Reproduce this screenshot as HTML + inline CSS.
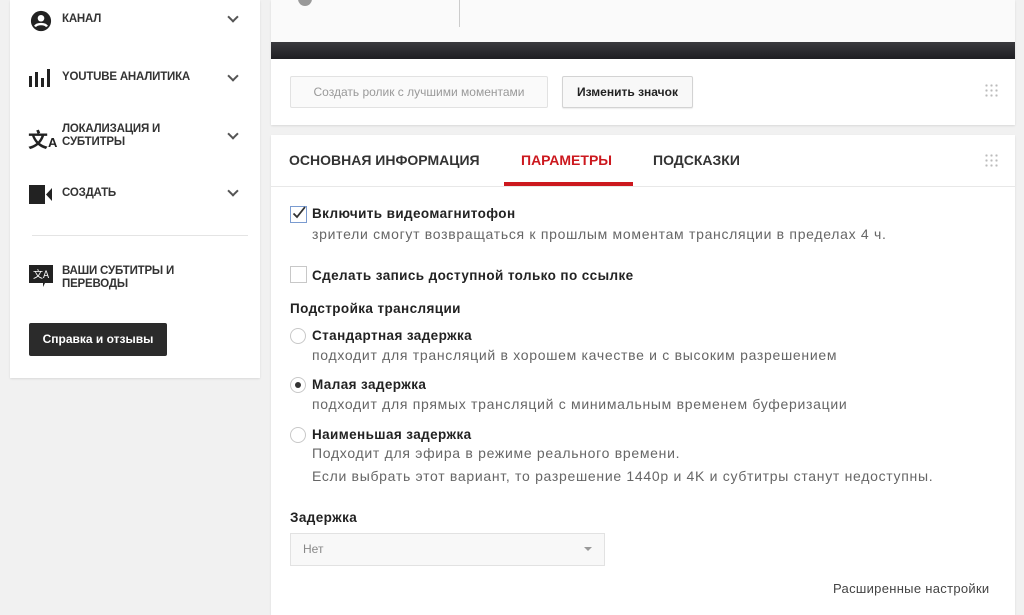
<!DOCTYPE html>
<html><head><meta charset="utf-8"><style>
*{box-sizing:border-box;margin:0;padding:0}
body{width:1024px;height:615px;background:#f1f1f1;font-family:"Liberation Sans","Noto Sans CJK SC",sans-serif;position:relative;overflow:hidden;color:#222}
.abs{position:absolute;white-space:nowrap}
.side{left:10px;top:0;width:250px;height:378px;background:#fff;box-shadow:0 1px 2px rgba(0,0,0,.1)}
.nav{position:absolute;left:52px;font-size:11.5px;font-weight:bold;color:#333;line-height:13px;letter-spacing:-.2px}
.chev{position:absolute;left:219px;width:8px;height:8px;border-right:2px solid #555;border-bottom:2px solid #555;transform:rotate(45deg)}
.card{background:#fff;box-shadow:0 1px 2px rgba(0,0,0,.1)}
.lbl{position:absolute;font-size:13.5px;font-weight:bold;color:#222;letter-spacing:.4px;white-space:nowrap}
.sub{position:absolute;font-size:14px;color:#666;letter-spacing:.7px;white-space:nowrap}
.rad{position:absolute;left:290px;width:16px;height:16px;border:1px solid #c8c8c8;border-radius:50%;background:#fff}
.grip{position:absolute;width:14px;height:14px;background-image:radial-gradient(circle,#bbb 1px,transparent 1.3px);background-size:5px 5px}
</style></head><body>
<div class="abs side">
 <svg class="abs" style="left:20px;top:10px" width="22" height="22" viewBox="0 0 24 24"><circle cx="12" cy="12" r="11" fill="#222"/><circle cx="12" cy="9" r="3.6" fill="#fff"/><path d="M5.5 18c2-3.5 11-3.5 13 0" stroke="#fff" stroke-width="2.6" fill="none"/></svg>
 <div class="nav" style="top:13px">КАНАЛ</div><div class="chev" style="top:13px"></div>
 <svg class="abs" style="left:19px;top:69px" width="22" height="18"><rect x="0" y="7" width="3" height="11" fill="#222"/><rect x="6" y="3" width="3" height="15" fill="#222"/><rect x="12" y="9" width="3" height="9" fill="#222"/><rect x="18" y="0" width="3" height="18" fill="#222"/></svg>
 <div class="nav" style="top:71px">YOUTUBE АНАЛИТИКА</div><div class="chev" style="top:72px"></div>
 <div class="abs" style="left:18px;top:124px;font-size:20px;font-weight:bold;color:#222">文<span style="font-size:13px">A</span></div>
 <div class="nav" style="top:123px">ЛОКАЛИЗАЦИЯ И<br>СУБТИТРЫ</div><div class="chev" style="top:130px"></div>
 <svg class="abs" style="left:19px;top:185px" width="24" height="19"><rect x="0" y="0" width="16" height="19" fill="#222"/><path d="M17 9.5L23 3V16Z" fill="#222"/></svg>
 <div class="nav" style="top:187px">СОЗДАТЬ</div><div class="chev" style="top:187px"></div>
 <div class="abs" style="left:22px;top:235px;width:216px;height:1px;background:#e4e4e4"></div>
 <svg class="abs" style="left:19px;top:265px" width="24" height="23"><path d="M0 0H24V18H16L14 22V18H0Z" fill="#222"/><text x="4" y="13" font-size="10" fill="#fff" font-family="Noto Sans CJK SC">文A</text></svg>
 <div class="nav" style="top:265px">ВАШИ СУБТИТРЫ И<br>ПЕРЕВОДЫ</div>
 <div class="abs" style="left:19px;top:323px;width:138px;height:33px;background:#2b2b2b;border-radius:2px;color:#fff;font-size:12px;font-weight:bold;line-height:33px;text-align:center">Справка и отзывы</div>
</div>

<div class="abs card" style="left:271px;top:0;width:744px;height:125px"></div>
<div class="abs" style="left:271px;top:0;width:744px;height:42px;background:#fafafa"></div>
<div class="abs" style="left:298px;top:-8px;width:14px;height:14px;border-radius:50%;background:#999"></div>
<div class="abs" style="left:459px;top:0;width:1px;height:27px;background:#ccc"></div>
<div class="abs" style="left:271px;top:42px;width:744px;height:17px;background:linear-gradient(#3a3a3e,#1e1e22)"></div>
<div class="abs" style="left:290px;top:76px;width:258px;height:32px;border:1px solid #e2e2e2;background:#fafafa;border-radius:2px;font-size:12px;color:#999;line-height:30px;text-align:center">Создать ролик с лучшими моментами</div>
<div class="abs" style="left:562px;top:76px;width:131px;height:32px;border:1px solid #d3d3d3;background:#f8f8f8;border-radius:2px;font-size:12px;font-weight:bold;color:#222;line-height:30px;text-align:center;box-shadow:0 1px 1px rgba(0,0,0,.08)">Изменить значок</div>
<div class="grip" style="left:984px;top:83px"></div>

<div class="abs card" style="left:271px;top:135px;width:744px;height:480px"></div>
<div class="abs" style="left:271px;top:186px;width:744px;height:1px;background:#e8e8e8"></div>
<div class="abs" style="left:289px;top:152px;font-size:14px;font-weight:bold;color:#333">ОСНОВНАЯ ИНФОРМАЦИЯ</div>
<div class="abs" style="left:521px;top:152px;font-size:14px;font-weight:bold;color:#cc181e">ПАРАМЕТРЫ</div>
<div class="abs" style="left:504px;top:182px;width:129px;height:4px;background:#cc181e"></div>
<div class="abs" style="left:653px;top:152px;font-size:14px;font-weight:bold;color:#333">ПОДСКАЗКИ</div>
<div class="grip" style="left:984px;top:153px"></div>

<div class="abs" style="left:290px;top:206px;width:17px;height:17px;border:1px solid #7a9bd0;background:#fff"></div>
<svg class="abs" style="left:291px;top:205px" width="16" height="16"><path d="M2.5 8.5L6 12L14 2" stroke="#333" stroke-width="1.8" fill="none"/></svg>
<div class="lbl" style="left:312px;top:206px">Включить видеомагнитофон</div>
<div class="sub" style="left:312px;top:226px">зрители смогут возвращаться к прошлым моментам трансляции в пределах 4 ч.</div>
<div class="abs" style="left:290px;top:266px;width:17px;height:17px;border:1px solid #c8c8c8;background:#fff"></div>
<div class="lbl" style="left:312px;top:268px">Сделать запись доступной только по ссылке</div>
<div class="lbl" style="left:290px;top:301px">Подстройка трансляции</div>
<div class="rad" style="top:328px"></div>
<div class="lbl" style="left:312px;top:328px">Стандартная задержка</div>
<div class="sub" style="left:312px;top:347px">подходит для трансляций в хорошем качестве и с высоким разрешением</div>
<div class="rad" style="top:377px"></div><div class="abs" style="left:295px;top:382px;width:6px;height:6px;border-radius:50%;background:#333"></div>
<div class="lbl" style="left:312px;top:377px">Малая задержка</div>
<div class="sub" style="left:312px;top:396px">подходит для прямых трансляций с минимальным временем буферизации</div>
<div class="rad" style="top:427px"></div>
<div class="lbl" style="left:312px;top:427px">Наименьшая задержка</div>
<div class="sub" style="left:312px;top:445px">Подходит для эфира в режиме реального времени.</div>
<div class="sub" style="left:312px;top:468px">Если выбрать этот вариант, то разрешение 1440p и 4K и субтитры станут недоступны.</div>
<div class="lbl" style="left:290px;top:510px">Задержка</div>
<div class="abs" style="left:290px;top:533px;width:315px;height:33px;border:1px solid #e2e2e2;background:#f8f8f8;font-size:12px;color:#888;line-height:31px;padding-left:12px">Нет</div>
<div class="abs" style="left:584px;top:547px;border-left:4px solid transparent;border-right:4px solid transparent;border-top:4px solid #999"></div>
<div class="abs" style="left:833px;top:581px;font-size:13px;color:#444;letter-spacing:.3px">Расширенные настройки</div>
</body></html>
